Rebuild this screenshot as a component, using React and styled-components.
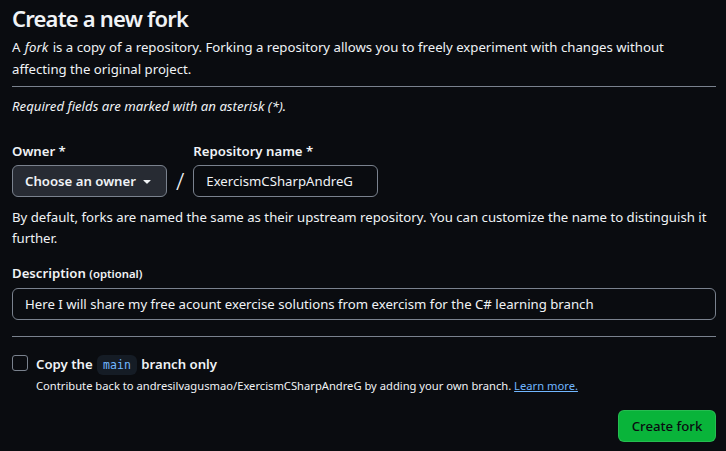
import React from "react";
import styled, { createGlobalStyle } from "styled-components";

const Global = createGlobalStyle`
  html, body { margin: 0; padding: 0; background: #0a0c10; }
  body {
    font-family: "Noto Sans", "Open Sans", sans-serif;
    color: #f0f3f6;
    -webkit-font-smoothing: antialiased;
  }
  * { box-sizing: border-box; }
`;

const Page = styled.main`
  width: 726px;
  height: 451px;
  padding: 3px 10px 0 12px;
  background: #0a0c10;
  font-size: 13.2px;
  line-height: 21px;
`;

const Title = styled.h1`
  margin: 0;
  font-size: 22px;
  line-height: 30px;
  font-weight: 600;
  letter-spacing: -0.8px;
`;

const Lead = styled.p`
  margin: 3px 0 0;
  font-size: 13.2px;
  line-height: 22px;
`;

const Em = styled.em`
  margin: 0 1px;
`;

const Divider = styled.hr`
  margin: ${(p) => p.$mt}px 0 0;
  border: 0;
  height: 1px;
  background: #7a828e;
`;

const Note = styled.p`
  margin: 9px 0 0;
  font-style: italic;
  font-size: 13.2px;
  line-height: 21px;
`;

const NameRow = styled.div`
  display: flex;
  align-items: flex-end;
  gap: 8px;
  margin-top: 24px;
`;

const Field = styled.div`
  display: flex;
  flex-direction: column;
  gap: 4px;
`;

const Label = styled.label`
  font-weight: 600;
  font-size: 13.2px;
  line-height: 20px;
`;

const Optional = styled.span`
  font-size: 11.3px;
  font-weight: 600;
`;

const Select = styled.button`
  display: flex;
  align-items: center;
  justify-content: space-between;
  height: 32px;
  width: 155px;
  padding: 0 11px 0 12px;
  border: 1px solid #7a828e;
  border-radius: 6px;
  background: #272b33;
  color: #f0f3f6;
  font-family: inherit;
  font-size: 13.2px;
  font-weight: 600;
  white-space: nowrap;
`;

const Slash = styled.span`
  font-size: 24px;
  line-height: 32px;
  height: 32px;
  padding: 0 1px;
  font-weight: 300;
`;

const Input = styled.div`
  display: flex;
  align-items: center;
  height: 32px;
  width: ${(p) => p.$w || "100%"};
  padding: 0 12px;
  border: 1px solid #7a828e;
  border-radius: 6px;
  background: #0a0c10;
  font-size: 13.2px;
  white-space: nowrap;
  overflow: hidden;
`;

const Help = styled.p`
  margin: 10px 0 0;
  font-size: 13.2px;
  line-height: 21px;
`;

const DescField = styled(Field)`
  margin-top: 14px;
`;

const CheckRow = styled.div`
  display: flex;
  gap: 8px;
  margin-top: 17px;
`;

const Box = styled.span`
  flex: none;
  width: 16px;
  height: 16px;
  margin-top: 1px;
  border: 1px solid #7a828e;
  border-radius: 3px;
`;

const CheckText = styled.div`
  display: flex;
  flex-direction: column;
`;

const CheckLabel = styled.span`
  font-weight: 600;
  font-size: 13.2px;
  line-height: 20px;
`;

const Code = styled.code`
  font-family: "DejaVu Sans Mono", "Liberation Mono", monospace;
  font-weight: 400;
  font-size: 11.5px;
  color: #71b7ff;
  background: #151c25;
  border-radius: 6px;
  padding: 3px 6px;
  margin: 0 1px;
`;

const Small = styled.span`
  font-size: 11.2px;
  line-height: 18px;
  margin-top: 2px;
`;

const Link = styled.a`
  color: #71b7ff;
  text-decoration: underline;
`;

const Actions = styled.div`
  display: flex;
  justify-content: flex-end;
  margin-top: 15px;
`;

const Primary = styled.button`
  height: 32px;
  width: 98px;
  padding: 0;
  border: 1px solid rgba(255, 255, 255, 0.12);
  border-radius: 6px;
  background: #09b43a;
  color: #0a0c10;
  font-family: inherit;
  font-size: 13.2px;
  font-weight: 500;
`;

const Caret = () => (
  <svg width="16" height="16" viewBox="0 0 16 16" fill="currentColor">
    <path d="m4.427 7.427 3.396 3.396a.25.25 0 0 0 .354 0l3.396-3.396A.25.25 0 0 0 11.396 7H4.604a.25.25 0 0 0-.177.427Z" />
  </svg>
);

export default function App() {
  return (
    <>
      <Global />
      <Page>
        <Title>Create a new fork</Title>
        <Lead>
          A <Em>fork</Em> is a copy of a repository. Forking a repository allows you to freely experiment with changes without affecting the original project.
        </Lead>
        <Divider $mt={6} />
        <Note>Required fields are marked with an asterisk (*).</Note>
        <NameRow>
          <Field>
            <Label>Owner *</Label>
            <Select>
              Choose an owner <Caret />
            </Select>
          </Field>
          <Slash>/</Slash>
          <Field>
            <Label>Repository name *</Label>
            <Input $w="185px">ExercismCSharpAndreG</Input>
          </Field>
        </NameRow>
        <Help>
          By default, forks are named the same as their upstream repository. You can customize the name to distinguish it further.
        </Help>
        <DescField>
          <Label>
            Description <Optional>(optional)</Optional>
          </Label>
          <Input>Here I will share my free acount exercise solutions from exercism for the C# learning branch</Input>
        </DescField>
        <Divider $mt={16} />
        <CheckRow>
          <Box />
          <CheckText>
            <CheckLabel>
              Copy the <Code>main</Code> branch only
            </CheckLabel>
            <Small>
              Contribute back to andresilvagusmao/ExercismCSharpAndreG by adding your own branch. <Link>Learn more.</Link>
            </Small>
          </CheckText>
        </CheckRow>
        <Actions>
          <Primary>Create fork</Primary>
        </Actions>
      </Page>
    </>
  );
}
